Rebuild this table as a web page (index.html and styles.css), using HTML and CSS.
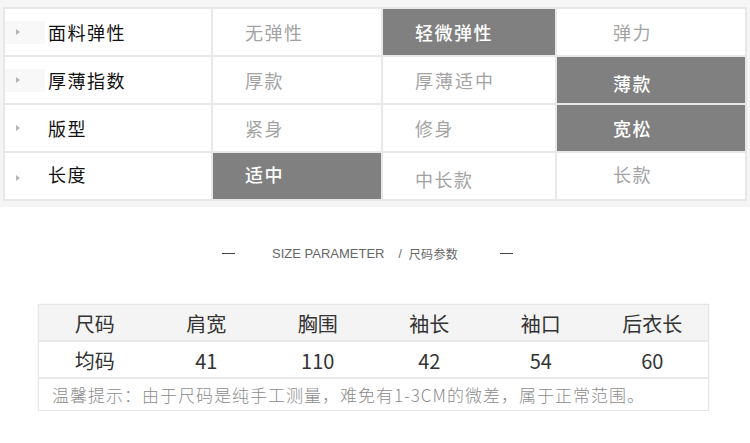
FILE: index.html
```html
<!DOCTYPE html>
<html lang="zh">
<head>
<meta charset="utf-8">
<link rel="stylesheet" href="styles.css">
</head>
<body>
<div class="spec">
  <div class="grid">
    <div class="cell label"><span class="arrow"><span class="tri"></span></span>面料弹性</div>
    <div class="cell opt">无弹性</div>
    <div class="cell opt on">轻微弹性</div>
    <div class="cell opt last">弹力</div>

    <div class="cell label"><span class="arrow"><span class="tri"></span></span>厚薄指数</div>
    <div class="cell opt">厚款</div>
    <div class="cell opt wide">厚薄适中</div>
    <div class="cell opt last on low">薄款</div>

    <div class="cell label"><span class="arrow plain"><span class="tri"></span></span>版型</div>
    <div class="cell opt">紧身</div>
    <div class="cell opt">修身</div>
    <div class="cell opt last on">宽松</div>

    <div class="cell label high"><span class="arrow plain"><span class="tri"></span></span>长度</div>
    <div class="cell opt on high">适中</div>
    <div class="cell opt low">中长款</div>
    <div class="cell opt last high">长款</div>
  </div>
</div>

<div class="heading">
  <span class="dash"></span>
  <span class="title"><span class="en">SIZE PARAMETER</span><span class="slash">/</span><span class="cn">尺码参数</span></span>
  <span class="dash"></span>
</div>

<div class="size">
  <div class="row head">
    <span>尺码</span><span>肩宽</span><span>胸围</span><span>袖长</span><span>袖口</span><span>后衣长</span>
  </div>
  <div class="row data">
    <span>均码</span><span>41</span><span>110</span><span>42</span><span>54</span><span>60</span>
  </div>
  <div class="note">温馨提示：由于尺码是纯手工测量，难免有1-3CM的微差，属于正常范围。</div>
</div>
</body>
</html>
```

FILE: styles.css
```css
* { box-sizing: border-box; }
html, body {
  margin: 0;
  padding: 0;
  background: #ffffff;
  font-family: "Noto Sans CJK SC", "Noto Sans", sans-serif;
}
.spec {
  background: #f5f5f5;
  padding: 7px 3px 7px 3px;
  height: 207px;
}
.grid {
  display: grid;
  grid-template-columns: 206px 168px 172px 188px;
  grid-template-rows: repeat(4, 46px);
  gap: 2px;
  padding: 2px;
  background: #e8e8e8;
  width: 744px;
}
.cell {
  background: #ffffff;
  display: flex;
  align-items: center;
  font-size: 18px;
  line-height: 1;
  letter-spacing: 1.5px;
}
.label {
  color: #111111;
  padding-left: 0;
}
.arrow {
  width: 40px;
  height: 23px;
  margin-left: 0;
  margin-right: 3px;
  background: #f8f8f8;
  display: flex;
  align-items: center;
  padding-left: 11px;
}
.arrow.plain { background: #ffffff; }
.tri {
  width: 0;
  height: 0;
  border-left: 4px solid #b5b5b5;
  border-top: 3px solid transparent;
  border-bottom: 3px solid transparent;
}
.opt {
  color: #a3a3a3;
  padding-left: 32px;
}
.opt.last { padding-left: 56px; }
.opt.wide { letter-spacing: 2px; }
.opt.low { padding-top: 5px; }
.cell.high { padding-bottom: 5px; }
.label.high .arrow { margin-top: 8px; }
.on {
  background: #808080;
  color: #ffffff;
  font-weight: 500;
}
.heading {
  display: flex;
  align-items: center;
  height: 92px;
  padding-left: 222px;
  padding-top: 1px;
  color: #666666;
}
.dash {
  width: 13px;
  height: 1px;
  background: #444444;
}
.title {
  display: flex;
  align-items: center;
  margin: 0 42px 0 37px;
  color: #666666;
  white-space: nowrap;
}
.en {
  font-family: "Liberation Sans", sans-serif;
  font-size: 13px;
  font-weight: 300;
}
.slash {
  font-family: "Liberation Sans", sans-serif;
  font-size: 12px;
  margin: 0 7px 0 14px;
}
.cn {
  font-size: 12px;
  letter-spacing: 0.3px;
}
.size {
  margin-left: 38px;
  width: 671px;
  border: 1px solid #e6e6e6;
  box-shadow: 0 0 1px #dddddd;
  margin-top: 5px;
}
.row {
  display: grid;
  grid-template-columns: repeat(6, 1fr);
  height: 37px;
  align-items: center;
  text-align: center;
  font-size: 20px;
  color: #333333;
  border-bottom: 2px solid #e8e8e8;
}
.row.head { background: #f4f4f4; height: 37px; }
.row.head span { padding-top: 2px; }
.row.data span { padding-top: 1px; }
.note {
  height: 31px;
  display: flex;
  align-items: center;
  padding-left: 13px;
  font-size: 17px;
  letter-spacing: 1px;
  color: #8c8c8c;
  font-weight: 300;
  white-space: nowrap;
}
```
